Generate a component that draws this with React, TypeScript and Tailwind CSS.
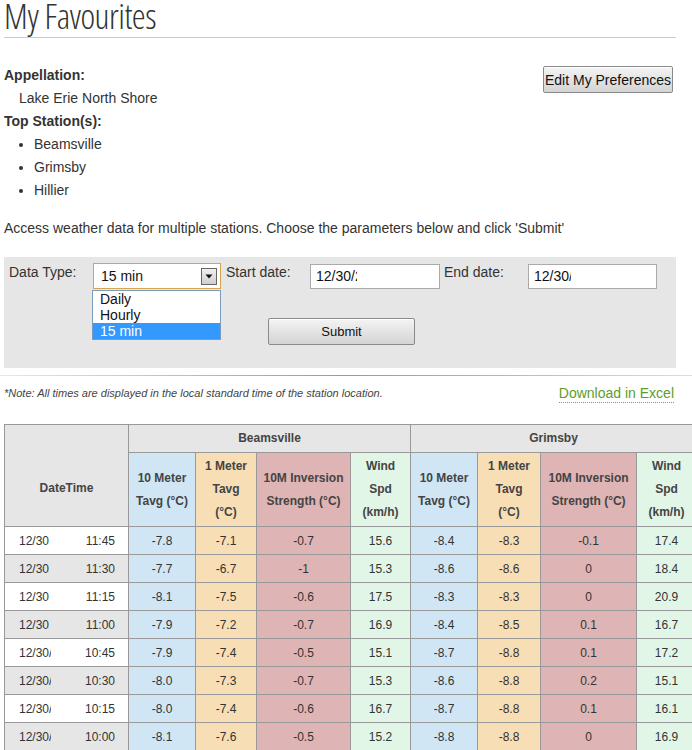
const cellColors = ["bg-[#d0e6f4]", "bg-[#f8deb4]", "bg-[#dfb4b4]", "bg-[#e2f6e8]"];

const rows = [
  { t: "11:45", clip: false, v: ["-7.8", "-7.1", "-0.7", "15.6", "-8.4", "-8.3", "-0.1", "17.4"] },
  { t: "11:30", clip: false, v: ["-7.7", "-6.7", "-1", "15.3", "-8.6", "-8.6", "0", "18.4"] },
  { t: "11:15", clip: false, v: ["-8.1", "-7.5", "-0.6", "17.5", "-8.3", "-8.3", "0", "20.9"] },
  { t: "11:00", clip: false, v: ["-7.9", "-7.2", "-0.7", "16.9", "-8.4", "-8.5", "0.1", "16.7"] },
  { t: "10:45", clip: true, v: ["-7.9", "-7.4", "-0.5", "15.1", "-8.7", "-8.8", "0.1", "17.2"] },
  { t: "10:30", clip: true, v: ["-8.0", "-7.3", "-0.7", "15.3", "-8.6", "-8.8", "0.2", "15.1"] },
  { t: "10:15", clip: true, v: ["-8.0", "-7.4", "-0.6", "16.7", "-8.7", "-8.8", "0.1", "16.1"] },
  { t: "10:00", clip: true, v: ["-8.1", "-7.6", "-0.5", "15.2", "-8.8", "-8.8", "0", "16.9"] },
];

function StationHeaders() {
  return (
    <>
      <th className="border border-[#999] bg-[#d0e6f4] font-bold">10 Meter<br />Tavg (°C)</th>
      <th className="border border-[#999] bg-[#f8deb4] font-bold">1 Meter<br />Tavg<br />(°C)</th>
      <th className="border border-[#999] bg-[#dfb4b4] font-bold">10M Inversion<br />Strength (°C)</th>
      <th className="border border-[#999] bg-[#e2f6e8] font-bold">Wind<br />Spd<br />(km/h)</th>
    </>
  );
}

const btn =
  "border border-[#8a8a8a] rounded-[2px] bg-gradient-to-b from-[#f4f4f4] to-[#d4d4d4] text-[#111] shadow-[inset_0_1px_0_#fff]";

export default function App() {
  return (
    <div className="w-[692px] h-[750px] overflow-hidden bg-white text-[#333] font-['Liberation_Sans',Arial,sans-serif] text-[14px]">
      <div className="pl-[4px] pr-[16px]">
        <h1 className="font-['Open_Sans',sans-serif] font-light [font-stretch:condensed] text-[35px] leading-[32px] pb-[5px] border-b border-[#ccc] text-[#333] tracking-[-0.5px]">
          My Favourites
        </h1>

        <div className="flex justify-between mt-[26px] leading-[23px]">
          <div>
            <div className="font-bold">Appellation:</div>
            <div className="pl-[15px]">Lake Erie North Shore</div>
            <div className="font-bold">Top Station(s):</div>
            <ul className="list-disc pl-[30px]">
              <li>Beamsville</li>
              <li>Grimsby</li>
              <li>Hillier</li>
            </ul>
          </div>
          <button className={`${btn} mt-[2px] mr-[3px] w-[130px] h-[27px] text-[14px] leading-none`}>
            Edit My Preferences
          </button>
        </div>

        <p className="mt-[15px] leading-[23px]">
          Access weather data for multiple stations. Choose the parameters below and click 'Submit'
        </p>

        <div className="mt-[17px] h-[111px] bg-[#e6e6e6] pl-[5px] pt-[6px]">
          <div className="flex items-start whitespace-nowrap">
            <div className="w-[84px] leading-[18px] text-[#333]">Data Type:</div>
            <div className="relative">
              <div className="w-[128px] h-[26px] border border-[#d9a54c] bg-white flex items-center justify-between pl-[7px] pr-[3px] text-[#111]">
                <span>15 min</span>
                <span className="w-[16px] h-[17px] border border-[#666] bg-gradient-to-b from-[#f0f0f0] to-[#cfcfcf] flex items-center justify-center">
                  <svg width="8" height="5" viewBox="0 0 8 5">
                    <path d="M0.5 0.5h7L4 4.5z" fill="#111" />
                  </svg>
                </span>
              </div>
              <div className="absolute left-[-1px] top-[27px] w-[129px] border border-[#7a9cc0] bg-white text-[14px] leading-[16px] text-[#111] z-10">
                <div className="pl-[7px]">Daily</div>
                <div className="pl-[7px]">Hourly</div>
                <div className="pl-[7px] bg-[#3399ff] text-white">15 min</div>
              </div>
            </div>
            <div className="ml-[5px] w-[84px] leading-[18px]">Start date:</div>
            <div className="mt-[1px] w-[130px] h-[25px] border border-[#aaa] bg-white flex items-center pl-[5px] text-[#111]">
              <span className="w-[41px] overflow-hidden">12/30/2014</span>
            </div>
            <div className="ml-[4px] w-[84px] leading-[18px]">End date:</div>
            <div className="mt-[1px] w-[129px] h-[25px] border border-[#aaa] bg-white flex items-center pl-[5px] text-[#111]">
              <span className="w-[37px] overflow-hidden">12/30/2014</span>
            </div>
          </div>
          <button className={`${btn} ml-[259px] mt-[29px] w-[147px] h-[27px] text-[13px] leading-none`}>
            Submit
          </button>
        </div>
      </div>

      <div className="mt-[7px] h-px bg-gradient-to-r from-[#e8e8e8] via-[#999] to-[#ddd]" />

      <div className="pl-[4px] pr-[18px] mt-[9px] flex justify-between items-start">
        <span className="italic text-[11px] leading-[17px] text-[#444]">
          *Note: All times are displayed in the local standard time of the station location.
        </span>
        <a className="text-[14px] leading-[17px] text-[#5e9c2e] border-b border-dotted border-[#b26ad6]">
          Download in Excel
        </a>
      </div>

      <div className="pl-[4px] mt-[21px]">
        <table className="table-fixed border-collapse w-[692px] text-[12px] text-[#444] text-center">
          <colgroup>
            <col className="w-[124px]" />
            <col className="w-[67px]" />
            <col className="w-[61px]" />
            <col className="w-[94px]" />
            <col className="w-[60px]" />
            <col className="w-[67px]" />
            <col className="w-[63px]" />
            <col className="w-[96px]" />
            <col className="w-[60px]" />
          </colgroup>
          <thead className="leading-[23px]">
            <tr className="h-[28px] bg-[#e6e6e6]">
              <th rowSpan={2} className="border border-[#999] font-bold align-bottom pb-[26px]">DateTime</th>
              <th colSpan={4} className="border border-[#999] font-bold">Beamsville</th>
              <th colSpan={4} className="border border-[#999] font-bold">Grimsby</th>
            </tr>
            <tr className="h-[74px]">
              <StationHeaders />
              <StationHeaders />
            </tr>
          </thead>
          <tbody className="text-[#333]">
            {rows.map((r, i) => (
              <tr key={r.t} className="h-[28px]">
                <td className={`border border-[#999] ${i % 2 === 0 ? "bg-white" : "bg-[#e6e6e6]"}`}>
                  <div className="flex justify-between pl-[14px] pr-[13px]">
                    <span className={`${r.clip ? "w-[32px]" : "w-[30px]"} overflow-hidden whitespace-nowrap text-left`}>
                      12/30/2014
                    </span>
                    <span>{r.t}</span>
                  </div>
                </td>
                {r.v.map((val, j) => (
                  <td key={j} className={`border border-[#999] ${cellColors[j % 4]}`}>
                    {val}
                  </td>
                ))}
              </tr>
            ))}
          </tbody>
        </table>
      </div>
    </div>
  );
}
